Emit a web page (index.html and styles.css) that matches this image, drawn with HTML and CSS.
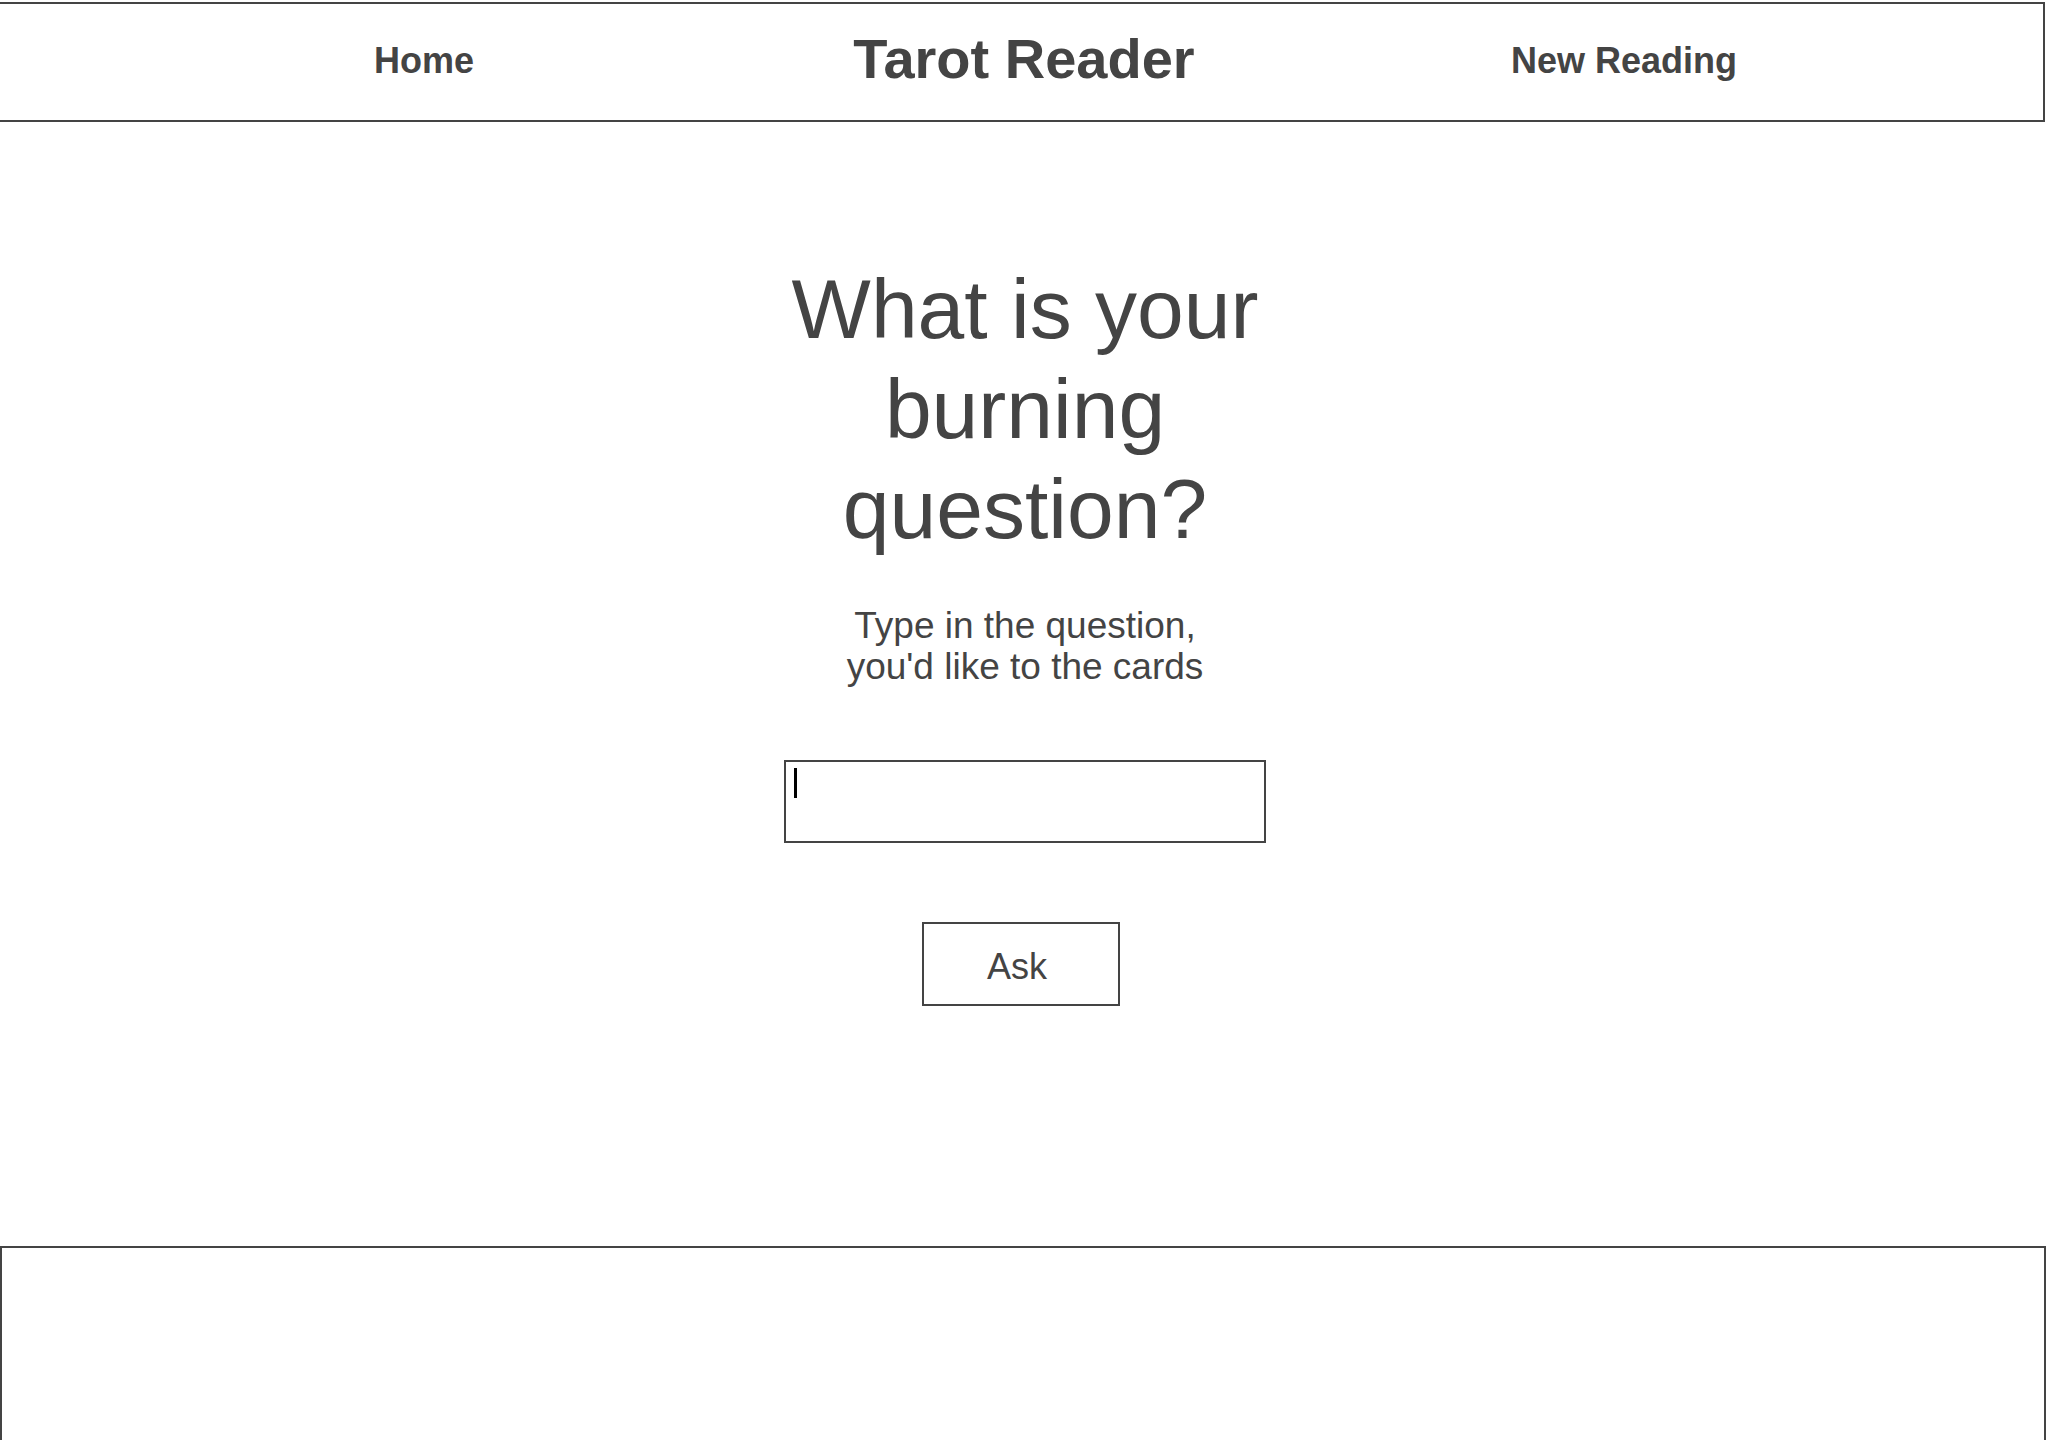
FILE: index.html
```html
<!DOCTYPE html>
<html lang="en">
<head>
<meta charset="utf-8">
<title>Tarot Reader</title>
<link rel="stylesheet" href="styles.css">
</head>
<body>
<header class="topbar">
  <nav class="topbar-grid">
    <a class="nav-link" href="#">Home</a>
    <span class="brand">Tarot Reader</span>
    <a class="nav-link" href="#">New Reading</a>
  </nav>
</header>
<main class="ask-section">
  <h1 class="headline">What is your<br>burning<br>question?</h1>
  <p class="subline">Type in the question,<br>you'd like to the cards</p>
  <div class="question-field" role="textbox" aria-label="Your question"><span class="caret"></span></div>
  <button class="ask-button" type="button">Ask</button>
</main>
<footer class="bottombar"></footer>
</body>
</html>
```

FILE: styles.css
```css
html, body {
  margin: 0;
  padding: 0;
  background: #ffffff;
}

body {
  font-family: "Liberation Sans", Arial, sans-serif;
  color: #444444;
  height: 1440px;
  overflow: hidden;
}

.topbar {
  box-sizing: border-box;
  margin: 2px 3px 0 -2px;
  height: 120px;
  border: 2px solid #444444;
}

.topbar-grid {
  box-sizing: border-box;
  height: 100%;
  padding: 0 119px 0 124px;
  display: grid;
  grid-template-columns: 1fr 1fr 1fr;
  align-items: center;
  justify-items: center;
}

.nav-link {
  font-size: 36px;
  font-weight: bold;
  color: #444444;
  text-decoration: none;
  line-height: 1;
  padding-bottom: 2px;
}

.brand {
  font-size: 56px;
  font-weight: bold;
  line-height: 1;
  padding-bottom: 7px;
}

.ask-section {
  display: flex;
  flex-direction: column;
  align-items: center;
  padding-top: 137px;
  padding-left: 2px;
}

.headline {
  margin: 0;
  font-size: 84px;
  font-weight: normal;
  line-height: 100px;
  text-align: center;
}

.subline {
  margin: 46px 0 0;
  font-size: 37px;
  line-height: 41px;
  text-align: center;
}

.question-field {
  box-sizing: border-box;
  margin-top: 73px;
  width: 482px;
  height: 83px;
  border: 2px solid #444444;
  padding: 6px 8px;
}

.caret {
  display: block;
  width: 3px;
  height: 30px;
  background: #000000;
}

.ask-button {
  box-sizing: border-box;
  margin: 79px 8px 0 0;
  width: 198px;
  height: 84px;
  border: 2px solid #444444;
  background: #ffffff;
  color: #444444;
  font-family: "Liberation Sans", Arial, sans-serif;
  font-size: 36px;
  padding: 5px 8px 0 0;
}

.bottombar {
  box-sizing: border-box;
  margin: 240px 2px 0 0;
  height: 196px;
  border: 2px solid #444444;
  border-bottom: none;
}
```
